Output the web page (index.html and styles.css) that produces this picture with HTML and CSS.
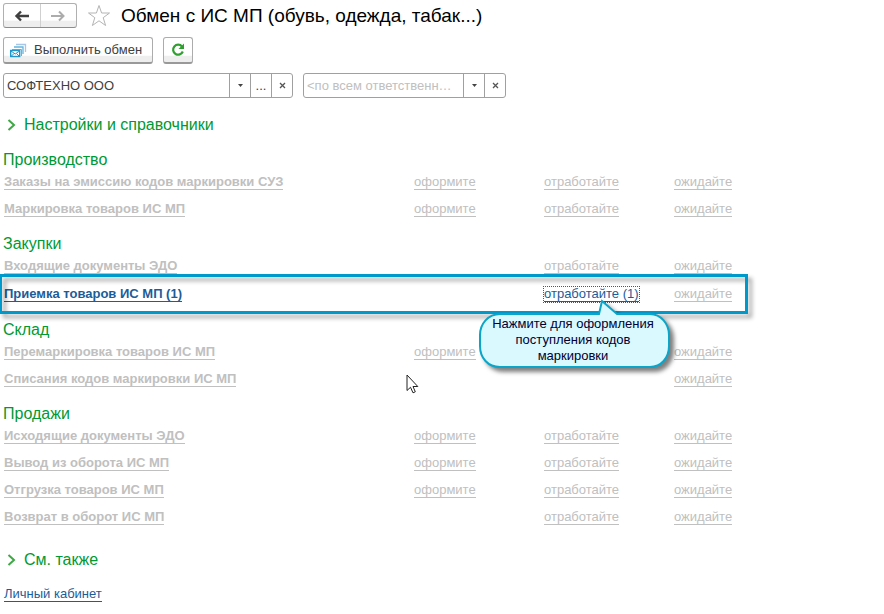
FILE: index.html
```html
<!DOCTYPE html>
<html lang="ru">
<head>
  <meta charset="utf-8">
  <title>Обмен с ИС МП</title>
  <link rel="stylesheet" href="styles.css">
</head>
<body>
  <header class="title-bar">
    <div class="history">
      <button class="history-btn" type="button" aria-label="Назад">
        <svg width="16" height="12" viewBox="0 0 16 12"><path d="M15 6H3M7 1.500L2.500 6L7 10.500" fill="none" stroke="#404040" stroke-width="2.400"/></svg>
      </button>
      <button class="history-btn" type="button" aria-label="Вперед">
        <svg width="16" height="12" viewBox="0 0 16 12"><path d="M1 6H13M9 1.500L13.500 6L9 10.500" fill="none" stroke="#acacac" stroke-width="2"/></svg>
      </button>
    </div>
    <svg class="star" width="24" height="24" viewBox="0 0 24 24"><path d="M12 1.500L14.600 9H22.500L16.200 13.700L18.600 21.500L12 16.800L5.400 21.500L7.800 13.700L1.500 9H9.400Z" fill="#fff" stroke="#b4b4b4"/></svg>
    <h1>Обмен с ИС МП (обувь, одежда, табак...)</h1>
  </header>

  <div class="toolbar">
    <button class="btn btn-exchange" type="button">
      <svg width="17" height="15" viewBox="0 0 17 15" fill="none">
        <path d="M6 1.500H15.500V9" stroke="#a9c6ea" stroke-width="1.300"/>
        <path d="M4 4H13V11" stroke="#63b5dd" stroke-width="1.300"/>
        <path d="M2 6.500H11.500V13" stroke="#4fc3c0" stroke-width="1"/>
        <rect x="0.700" y="7.500" width="9" height="6" fill="#fff" stroke="#1e96cc" stroke-width="1.400"/>
        <path d="M1 8L5.200 11L9.500 8M1 13.500L4 10.500M9.500 13.500L6.500 10.500" stroke="#1e96cc"/>
      </svg>
      <span>Выполнить обмен</span>
    </button>
    <button class="btn btn-refresh" type="button" aria-label="Обновить">
      <svg width="14" height="14" viewBox="0 0 14 14"><path d="M11 3.500A5 5 0 1 0 11.800 8.500" fill="none" stroke="#2fa02f" stroke-width="2.200"/><path d="M13 0.500V6H7.500Z" fill="#2fa02f"/></svg>
    </button>
  </div>

  <div class="filters">
    <div class="field field-org">
      <input type="text" value="СОФТЕХНО ООО" aria-label="Организация">
      <button type="button" aria-label="Выбрать из списка"><svg width="5" height="3" viewBox="0 0 5 3"><path d="M0 0H5L2.500 3Z" fill="#444"/></svg></button>
      <button type="button">...</button>
      <button type="button" aria-label="Очистить"><svg width="7" height="7" viewBox="0 0 7 7"><path d="M1 1L6 6M6 1L1 6" stroke="#555" stroke-width="1.300"/></svg></button>
    </div>
    <div class="field field-person">
      <input type="text" placeholder="&lt;по всем ответственным&gt;" aria-label="Ответственный">
      <button type="button" aria-label="Выбрать из списка"><svg width="5" height="3" viewBox="0 0 5 3"><path d="M0 0H5L2.500 3Z" fill="#444"/></svg></button>
      <button type="button" aria-label="Очистить"><svg width="7" height="7" viewBox="0 0 7 7"><path d="M1 1L6 6M6 1L1 6" stroke="#555" stroke-width="1.300"/></svg></button>
    </div>
  </div>

  <button class="expander" type="button">
    <svg width="9" height="12" viewBox="0 0 9 12"><path d="M1.500 1L7 6L1.500 11" fill="none" stroke="#3fa845" stroke-width="2"/></svg>
    <span>Настройки и справочники</span>
  </button>

  <main>
    <section class="group">
      <h2>Производство</h2>
      <div class="row">
        <a class="name" href="#">Заказы на эмиссию кодов маркировки СУЗ</a>
        <a class="make" href="#">оформите</a>
        <a class="process" href="#">отработайте</a>
        <a class="wait" href="#">ожидайте</a>
      </div>
      <div class="row">
        <a class="name" href="#">Маркировка товаров ИС МП</a>
        <a class="make" href="#">оформите</a>
        <a class="process" href="#">отработайте</a>
        <a class="wait" href="#">ожидайте</a>
      </div>
    </section>

    <section class="group">
      <h2>Закупки</h2>
      <div class="row">
        <a class="name" href="#">Входящие документы ЭДО</a>
        <a class="process" href="#">отработайте</a>
        <a class="wait" href="#">ожидайте</a>
      </div>
      <div class="row row-active">
        <a class="name active" href="#">Приемка товаров ИС МП (1)</a>
        <a class="process active focused" href="#">отработайте (1)</a>
        <a class="wait" href="#">ожидайте</a>
        <div class="callout">
          <svg class="callout-shape" width="194" height="70" viewBox="0 0 194 70"><path d="M22 14H121L124 1L139 14H172C183 14 191 24 191 35V46C191 58 183 67 172 67H22C10 67 2 58 2 46V35C2 24 10 14 22 14Z" fill="#d9f9ff" stroke="#0aa5c8" stroke-width="2"/></svg>
          <p>Нажмите для оформления поступления кодов маркировки</p>
        </div>
      </div>
    </section>

    <section class="group">
      <h2>Склад</h2>
      <div class="row">
        <a class="name" href="#">Перемаркировка товаров ИС МП</a>
        <a class="make" href="#">оформите</a>
        <a class="wait" href="#">ожидайте</a>
      </div>
      <div class="row">
        <a class="name" href="#">Списания кодов маркировки ИС МП</a>
        <a class="wait" href="#">ожидайте</a>
      </div>
    </section>

    <section class="group">
      <h2>Продажи</h2>
      <div class="row">
        <a class="name" href="#">Исходящие документы ЭДО</a>
        <a class="make" href="#">оформите</a>
        <a class="process" href="#">отработайте</a>
        <a class="wait" href="#">ожидайте</a>
      </div>
      <div class="row">
        <a class="name" href="#">Вывод из оборота ИС МП</a>
        <a class="make" href="#">оформите</a>
        <a class="process" href="#">отработайте</a>
        <a class="wait" href="#">ожидайте</a>
      </div>
      <div class="row">
        <a class="name" href="#">Отгрузка товаров ИС МП</a>
        <a class="make" href="#">оформите</a>
        <a class="process" href="#">отработайте</a>
        <a class="wait" href="#">ожидайте</a>
      </div>
      <div class="row">
        <a class="name" href="#">Возврат в оборот ИС МП</a>
        <a class="process" href="#">отработайте</a>
        <a class="wait" href="#">ожидайте</a>
      </div>
    </section>
  </main>

  <footer>
    <button class="expander" type="button">
      <svg width="9" height="12" viewBox="0 0 9 12"><path d="M1.500 1L7 6L1.500 11" fill="none" stroke="#3fa845" stroke-width="2"/></svg>
      <span>См. также</span>
    </button>
    <a class="account" href="#">Личный кабинет</a>
  </footer>

  <svg class="cursor" width="13" height="20" viewBox="0 0 13 20"><path d="M1 1V16.500L4.500 13.300L7 18.800L9.300 17.800L7 12.500H11.800Z" fill="#fff" stroke="#222"/></svg>
</body>
</html>
```

FILE: styles.css
```css
*,
*::before {
  box-sizing: border-box;
}

body {
  margin: 0;
  padding: 3px;
  background: #fff;
  color: #404040;
  font-family: "Liberation Sans", Arial, sans-serif;
  font-size: 13px;
  line-height: 16px;
}

button,
input {
  font: inherit;
  color: inherit;
}

button {
  display: flex;
  align-items: center;
  justify-content: center;
  padding: 0;
  cursor: pointer;
}

/* Title */
.title-bar {
  display: flex;
  align-items: center;
  height: 25px;
}

.history {
  display: flex;
  width: 74px;
  height: 25px;
  border: 1px solid #b0b0b0;
  border-bottom-color: #8c8c8c;
  border-radius: 3px;
  background: linear-gradient(#fff 70%, #eee 75%);
}

.history-btn {
  flex: 1;
  border: none;
  background: none;
}

.history-btn + .history-btn {
  border-left: 1px solid #d0d0d0;
}

.star {
  margin: 0 10px;
}

h1 {
  margin: 0;
  color: #000;
  font-size: 19px;
  font-weight: normal;
  line-height: 24px;
}

/* Buttons */
.toolbar {
  display: flex;
  gap: 10px;
  margin-top: 9px;
}

.btn {
  height: 27px;
  border: 1px solid #acacac;
  border-bottom: 2px solid #999;
  border-radius: 3px;
  background: linear-gradient(#fff 72%, #eee 76%);
}

.btn-exchange {
  justify-content: flex-start;
  gap: 7px;
  width: 150px;
  padding-left: 6px;
}

.btn-refresh {
  width: 30px;
}

/* Fields */
.filters {
  display: flex;
  gap: 10px;
  margin-top: 9px;
}

.field {
  display: flex;
  height: 25px;
  border: 1px solid #a0a0a0;
  border-radius: 3px;
}

.field-org {
  width: 290px;
}

.field-person {
  width: 203px;
}

.field input {
  flex: 1;
  min-width: 0;
  padding: 0 3px;
  border: none;
  background: none;
  outline: none;
  text-overflow: ellipsis;
}

.field input::placeholder {
  color: #c0c0c0;
  opacity: 1;
}

.field button {
  width: 21px;
  border: none;
  border-left: 1px solid #a0a0a0;
  background: none;
}

/* Sections */
.expander {
  gap: 8px;
  height: 20px;
  margin-top: 17px;
  padding: 0 4px;
  border: none;
  background: none;
  color: #009933;
  font-size: 16px;
}

main {
  margin-top: 15px;
}

.group {
  margin-bottom: 11px;
}

h2 {
  margin: 0;
  color: #009933;
  font-size: 16px;
  font-weight: normal;
  line-height: 19px;
}

.row {
  display: grid;
  grid-template-columns: 410px 130px 130px auto;
  align-items: center;
  justify-content: start;
  height: 27px;
  padding-left: 1px;
}

.row a {
  grid-row: 1;
  justify-self: start;
  border-bottom: 1px solid #c0c0c0;
  color: #c0c0c0;
  line-height: 14px;
  text-decoration: none;
}

.name {
  grid-column: 1;
  font-weight: bold;
}

.make {
  grid-column: 2;
}

.process {
  grid-column: 3;
}

.wait {
  grid-column: 4;
}

.row a.active {
  border-bottom-color: #1c5c99;
  color: #1c5c99;
}

.row a.focused {
  outline: 1px dotted #555;
}

/* Highlighted row with its frame and hint */
.row-active {
  position: relative;
  height: 29px;
}

.row-active::before {
  content: "";
  position: absolute;
  top: -6px;
  left: -4px;
  width: 749px;
  height: 40px;
  border: 3px solid #0099cc;
  filter: drop-shadow(4px 4px 2px rgba(0, 0, 0, 0.35));
  pointer-events: none;
}

.callout {
  position: absolute;
  z-index: 1;
  top: 20px;
  left: 475px;
  width: 194px;
  height: 70px;
}

.callout-shape {
  position: absolute;
  top: 0;
  left: 0;
  overflow: visible;
  filter: drop-shadow(4px 4px 2px rgba(0, 0, 0, 0.5));
}

.callout p {
  position: relative;
  margin: 0;
  padding: 16px 14px 0 10px;
  color: #000033;
  text-align: center;
}

/* Footer */
footer .expander {
  margin-top: 19px;
}

.account {
  display: inline-block;
  margin: 17px 0 0 1px;
  border-bottom: 1px solid #1c5c99;
  color: #1c5c99;
  line-height: 14px;
  text-decoration: none;
}

.cursor {
  position: absolute;
  top: 374px;
  left: 406px;
}
```
